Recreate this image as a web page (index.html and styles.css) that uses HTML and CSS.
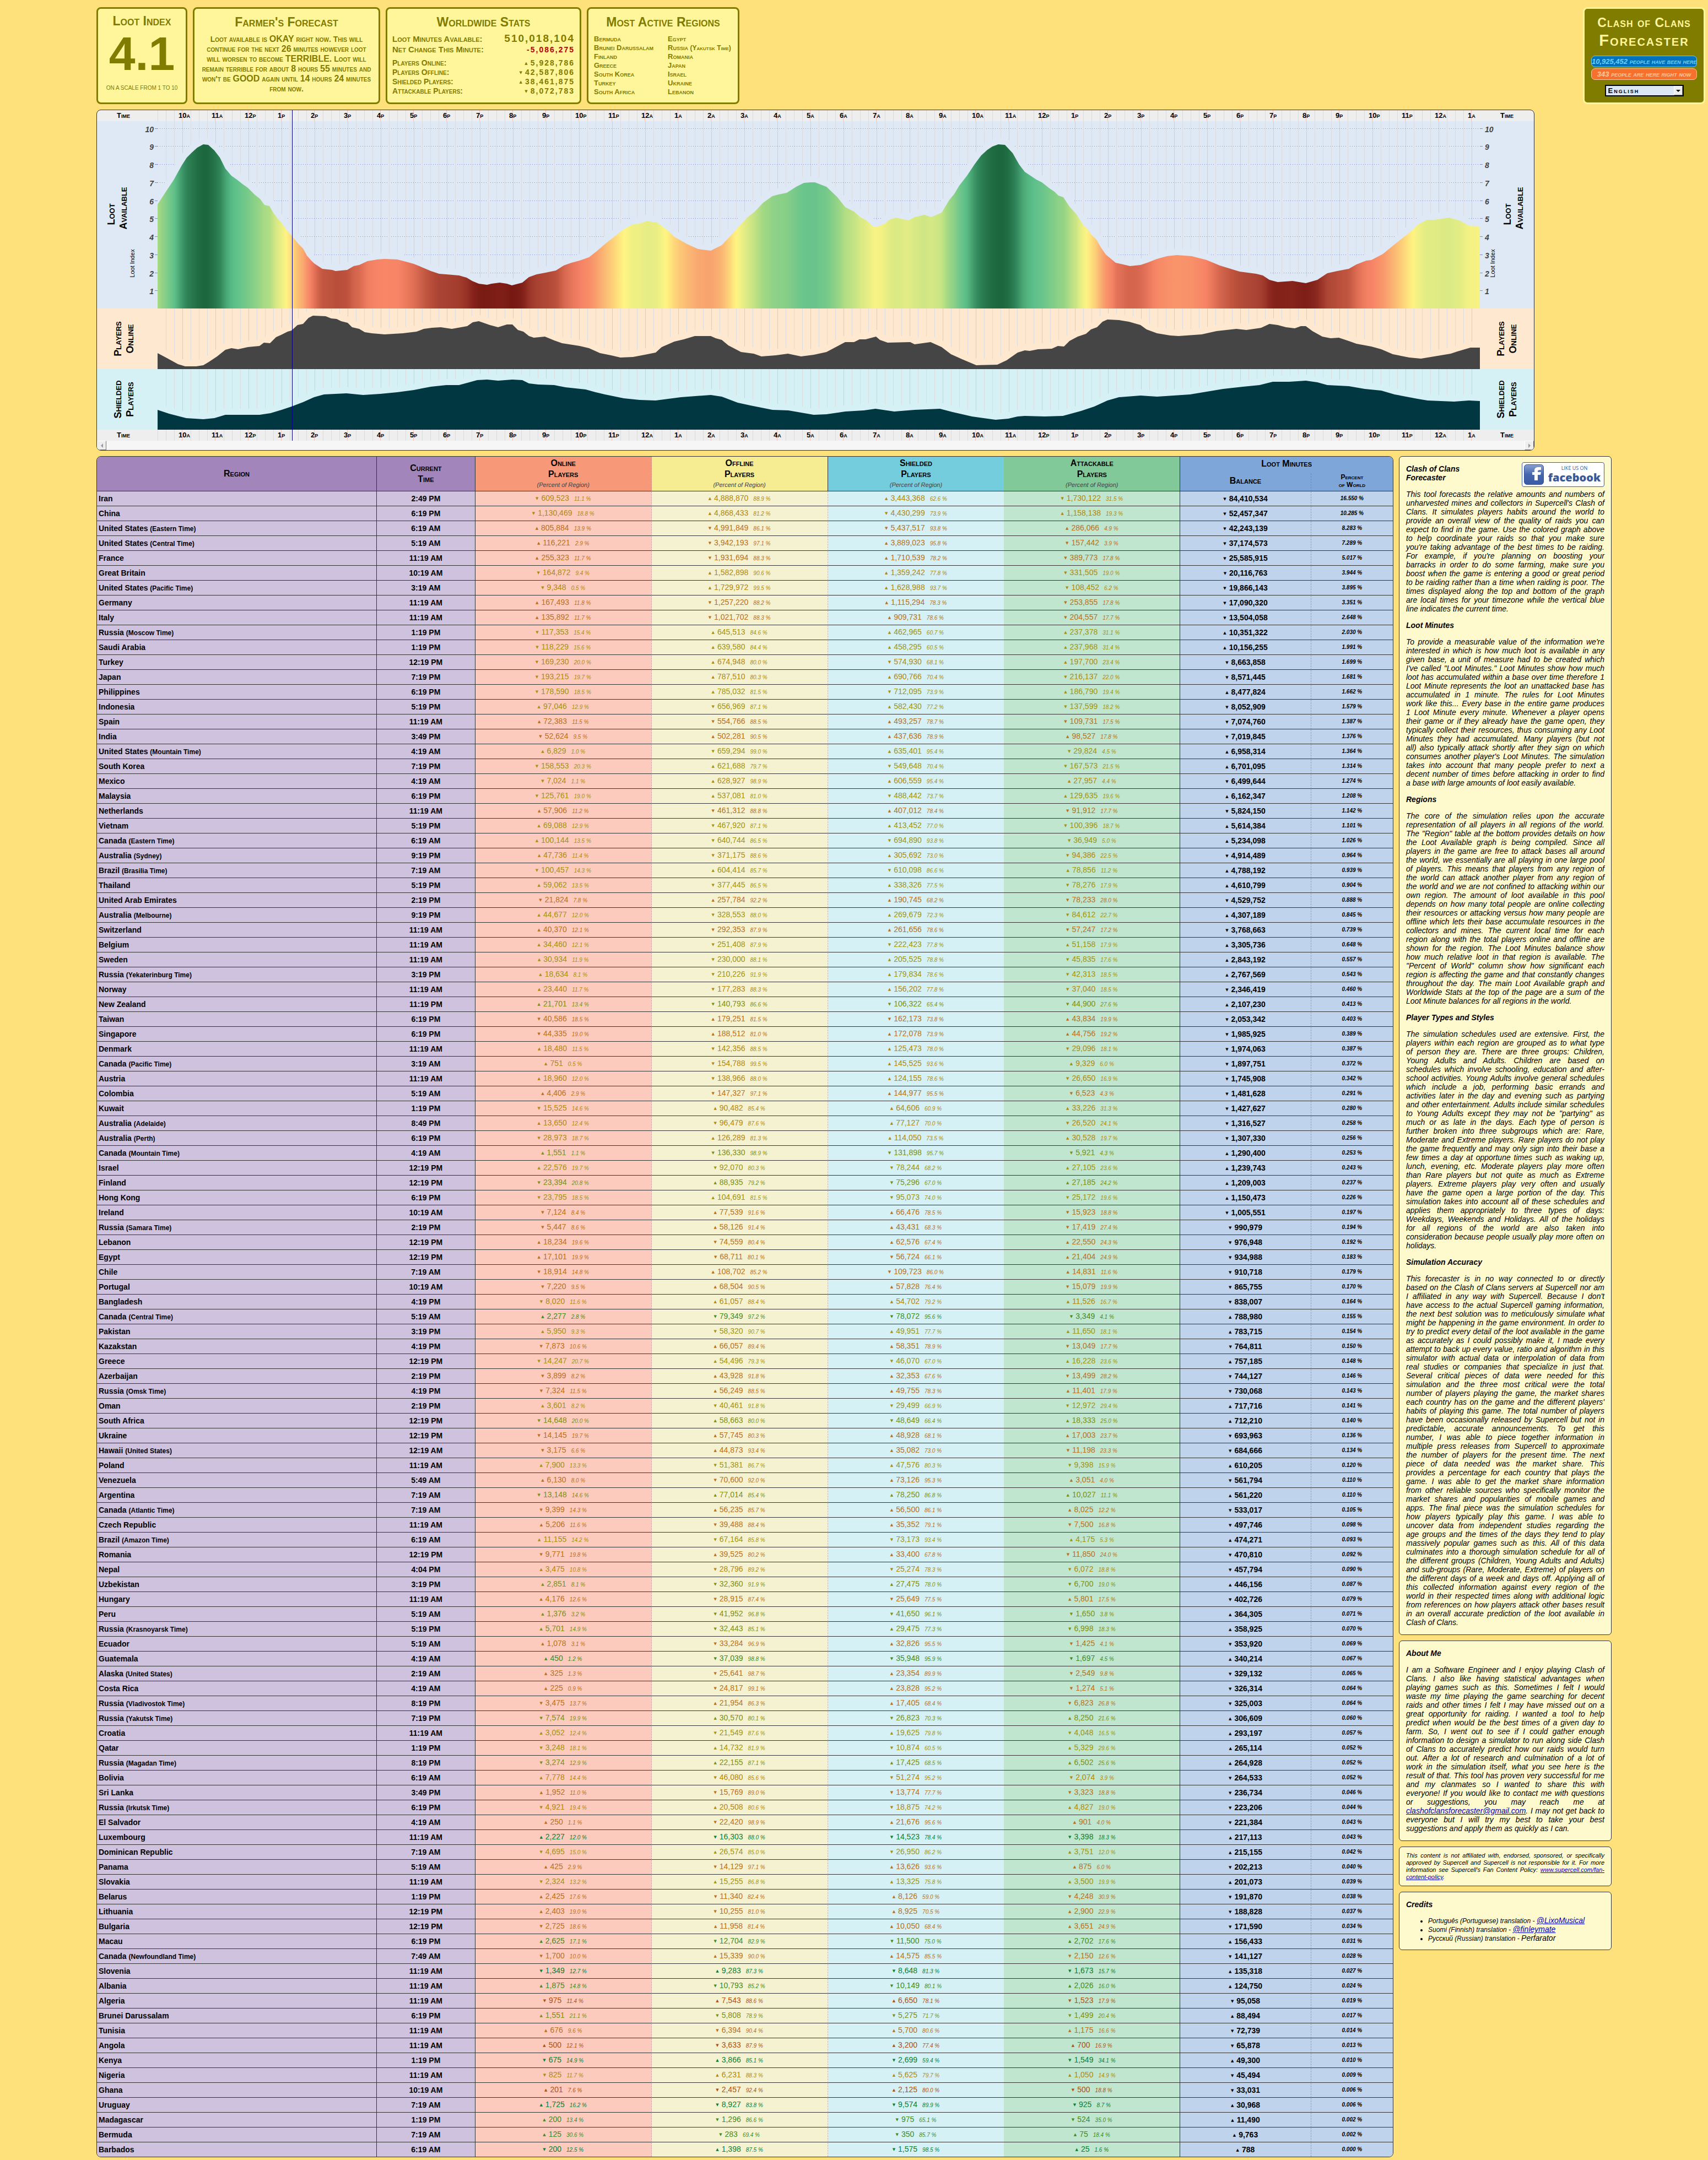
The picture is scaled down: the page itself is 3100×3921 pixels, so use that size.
FILE: index.html
```html
<!DOCTYPE html>
<html lang="en">
<head>
<meta charset="utf-8">
<title>Clash of Clans Forecaster</title>
<link rel="stylesheet" href="styles.css">
</head>
<body>
<header class="top">
  <div class="cards">
    <section class="card card-index">
      <h2>Loot Index</h2>
      <p class="index-value">4.1</p>
      <p class="index-note">on a scale from 1 to 10</p>
    </section>
    <section class="card card-forecast">
      <h2>Farmer's Forecast</h2>
      <p>Loot available is <b>OKAY</b> right now. This will<br>
        continue for the next <b>26</b> minutes however loot<br>
        will worsen to become <b>TERRIBLE.</b> Loot will<br>
        remain terrible for about <b>8</b> hours <b>55</b> minutes and<br>
        won't be <b>GOOD</b> again until <b>14</b> hours <b>24</b> minutes<br>
        from now.</p>
    </section>
    <section class="card card-stats">
      <h2>Worldwide Stats</h2>
      <dl class="stats-main">
        <div><dt>Loot Minutes Available:</dt><dd class="big">510,018,104</dd></div>
        <div><dt>Net Change This Minute:</dt><dd class="loss">-5,086,275</dd></div>
      </dl>
      <dl class="stats-players">
        <div><dt>Players Online:</dt><dd><i class="arrow">▲</i>5,928,786</dd></div>
        <div><dt>Players Offline:</dt><dd><i class="arrow">▼</i>42,587,806</dd></div>
        <div><dt>Shielded Players:</dt><dd><i class="arrow">▲</i>38,461,875</dd></div>
        <div><dt>Attackable Players:</dt><dd><i class="arrow">▼</i>8,072,783</dd></div>
      </dl>
    </section>
    <section class="card card-regions">
      <h2>Most Active Regions</h2>
      <ul>
        <li>Bermuda</li><li>Brunei Darussalam</li><li>Finland</li><li>Greece</li><li>South Korea</li><li>Turkey</li><li>South Africa</li>
        <li>Egypt</li><li>Russia <small>(Yakutsk Time)</small></li><li>Romania</li><li>Japan</li><li>Israel</li><li>Ukraine</li><li>Lebanon</li>
      </ul>
    </section>
  </div>
  <div class="brand">
    <h1><span>Clash of Clans</span> <strong>Forecaster</strong></h1>
    <p class="pill pill-blue"><b>10,925,452</b> people have been here</p>
    <p class="pill pill-orange"><b>343</b> people are here right now</p>
    <label class="lang">
      <select aria-label="Language"><option>English</option><option>Português</option><option>Suomi</option><option>Русский</option></select>
      <span class="lang-arrow"></span>
    </label>
  </div>
</header>

<section class="chart" aria-label="Forecast chart">
  <div class="corner">Time</div><div class="hours" data-hours></div><div class="corner">Time</div>
  <svg class="side loot" data-side="left" viewBox="0 0 110 340">
    <text class="side-title" transform="translate(32 169) rotate(-90)">Loot</text>
    <text class="side-title" transform="translate(54 158) rotate(-90)">Available</text>
    <text class="side-note" transform="translate(68 258) rotate(-90)">Loot Index</text>
  </svg>
  <svg class="plot loot" id="plot-loot" viewBox="0 0 2400 340" preserveAspectRatio="none"></svg>
  <svg class="side loot" data-side="right" viewBox="0 0 98 340">
    <text class="side-title" transform="translate(56 169) rotate(-90)">Loot</text>
    <text class="side-title" transform="translate(78 158) rotate(-90)">Available</text>
    <text class="side-note" transform="translate(27 258) rotate(-90)">Loot Index</text>
  </svg>
  <svg class="side online" viewBox="0 0 110 110">
    <text class="side-title" transform="translate(44 55) rotate(-90)">Players</text>
    <text class="side-title" transform="translate(66 55) rotate(-90)">Online</text>
  </svg>
  <svg class="plot online" id="plot-online" viewBox="0 0 2400 110" preserveAspectRatio="none"></svg>
  <svg class="side online" viewBox="0 0 98 110">
    <text class="side-title" transform="translate(44 55) rotate(-90)">Players</text>
    <text class="side-title" transform="translate(66 55) rotate(-90)">Online</text>
  </svg>
  <svg class="side shielded" viewBox="0 0 110 110">
    <text class="side-title" transform="translate(44 55) rotate(-90)">Shielded</text>
    <text class="side-title" transform="translate(66 55) rotate(-90)">Players</text>
  </svg>
  <svg class="plot shielded" id="plot-shielded" viewBox="0 0 2400 110" preserveAspectRatio="none"></svg>
  <svg class="side shielded" viewBox="0 0 98 110">
    <text class="side-title" transform="translate(44 55) rotate(-90)">Shielded</text>
    <text class="side-title" transform="translate(66 55) rotate(-90)">Players</text>
  </svg>
  <div class="corner">Time</div><div class="hours" data-hours></div><div class="corner">Time</div>
  <div class="scroller">
    <button type="button" aria-label="Scroll left"><svg viewBox="0 0 8 8"><path d="M6 0v8L2 4z"/></svg></button>
    <button type="button" aria-label="Scroll right"><svg viewBox="0 0 8 8"><path d="M2 0v8l4-4z"/></svg></button>
  </div>
  <div class="now"></div>
</section>

<main class="content">
  <table class="regions">
    <colgroup><col class="c-region"><col class="c-time"><col class="c-num"><col class="c-num"><col class="c-num"><col class="c-num"><col class="c-balance"><col class="c-share"></colgroup>
    <thead>
      <tr class="head-a">
        <th rowspan="2" class="k-region">Region</th>
        <th rowspan="2" class="k-time">Current<br>Time</th>
        <th rowspan="2" class="k-online">Online<br>Players<small>(Percent of Region)</small></th>
        <th rowspan="2" class="k-offline">Offline<br>Players<small>(Percent of Region)</small></th>
        <th rowspan="2" class="k-shielded">Shielded<br>Players<small>(Percent of Region)</small></th>
        <th rowspan="2" class="k-attack">Attackable<br>Players<small>(Percent of Region)</small></th>
        <th colspan="2" class="k-loot">Loot Minutes</th>
      </tr>
      <tr class="head-b">
        <th class="k-balance">Balance</th>
        <th class="k-share">Percent<br>of World</th>
      </tr>
    </thead>
    <tbody id="rows"></tbody>
  </table>

  <aside class="side-column">
    <article class="panel">
      <a class="fb" href="#facebook">
        <svg class="fb-icon" viewBox="0 0 36 37"><defs><linearGradient id="fbg" x1="0" y1="0" x2="0" y2="1"><stop offset="0" stop-color="#8aa0d2"/><stop offset=".5" stop-color="#4565ad"/><stop offset="1" stop-color="#3c5ba6"/></linearGradient></defs><rect x=".5" y=".5" width="35" height="36" rx="5" fill="url(#fbg)" stroke="#2f4f9a"/><path d="M19 29V19h-4v-5h4v-3c0-4 3-6 7-6h5v5h-3c-2 0-3 1-3 2v2h6l-1 5h-5v10z" fill="#fff"/></svg>
        <span class="fb-text"><small>LIKE US ON</small><b>facebook</b></span>
      </a>
      <h3>Clash of Clans Forecaster</h3>
      <p>This tool forecasts the relative amounts and numbers of
unharvested mines and collectors in Supercell's Clash of
Clans. It simulates players habits around the world to
provide an overall view of the quality of raids you can
expect to find in the game. Use the colored graph above
to help coordinate your raids so that you make sure
you're taking advantage of the best times to be raiding.
For example, if you're planning on boosting your
barracks in order to do some farming, make sure you
boost when the game is entering a good or great period
to be raiding rather than a time when raiding is poor. The
times displayed along the top and bottom of the graph
are local times for your timezone while the vertical blue
<span>line indicates the current time.</span></p>
      <h3>Loot Minutes</h3>
      <p>To provide a measurable value of the information we're
interested in which is how much loot is available in any
given base, a unit of measure had to be created which
I've called "Loot Minutes." Loot Minutes show how much
loot has accumulated within a base over time therefore 1
Loot Minute represents the loot an unattacked base has
accumulated in 1 minute. The rules for Loot Minutes
work like this... Every base in the entire game produces
1 Loot Minute every minute. Whenever a player opens
their game or if they already have the game open, they
typically collect their resources, thus consuming any Loot
Minutes they had accumulated. Many players (but not
all) also typically attack shortly after they sign on which
consumes another player's Loot Minutes. The simulation
takes into account that many people prefer to next a
decent number of times before attacking in order to find
<span>a base with large amounts of loot easily available.</span></p>
      <h3>Regions</h3>
      <p>The core of the simulation relies upon the accurate
representation of all players in all regions of the world.
The "Region" table at the bottom provides details on how
the Loot Available graph is being compiled. Since all
players in the game are free to attack bases all around
the world, we essentially are all playing in one large pool
of players. This means that players from any region of
the world can attack another player from any region of
the world and we are not confined to attacking within our
own region. The amount of loot available in this pool
depends on how many total people are online collecting
their resources or attacking versus how many people are
offline which lets their base accumulate resources in the
collectors and mines. The current local time for each
region along with the total players online and offline are
shown for the region. The Loot Minutes balance show
how much relative loot in that region is available. The
"Percent of World" column show how significant each
region is affecting the game and that constantly changes
throughout the day. The main Loot Available graph and
Worldwide Stats at the top of the page are a sum of the
<span>Loot Minute balances for all regions in the world.</span></p>
      <h3>Player Types and Styles</h3>
      <p>The simulation schedules used are extensive. First, the
players within each region are grouped as to what type
of person they are. There are three groups: Children,
Young Adults and Adults. Children are based on
schedules which involve schooling, education and after-
school activities. Young Adults involve general schedules
which include a job, performing basic errands and
activities later in the day and evening such as partying
and other entertainment. Adults include similar schedules
to Young Adults except they may not be "partying" as
much or as late in the days. Each type of person is
further broken into three subgroups which are: Rare,
Moderate and Extreme players. Rare players do not play
the game frequently and may only sign into their base a
few times a day at opportune times such as waking up,
lunch, evening, etc. Moderate players play more often
than Rare players but not quite as much as Extreme
players. Extreme players play very often and usually
have the game open a large portion of the day. This
simulation takes into account all of these schedules and
applies them appropriately to three types of days:
Weekdays, Weekends and Holidays. All of the holidays
for all regions of the world are also taken into
consideration because people usually play more often on
<span>holidays.</span></p>
      <h3>Simulation Accuracy</h3>
      <p>This forecaster is in no way connected to or directly
based on the Clash of Clans servers at Supercell nor am
I affiliated in any way with Supercell. Because I don't
have access to the actual Supercell gaming information,
the next best solution was to meticulously simulate what
might be happening in the game environment. In order to
try to predict every detail of the loot available in the game
as accurately as I could possibly make it, I made every
attempt to back up every value, ratio and algorithm in this
simulator with actual data or interpolation of data from
real studies or companies that specialize in just that.
Several critical pieces of data were needed for this
simulation and the three most critical were the total
number of players playing the game, the market shares
each country has on the game and the different players'
habits of playing this game. The total number of players
have been occasionally released by Supercell but not in
predictable, accurate announcements. To get this
number, I was able to piece together information in
multiple press releases from Supercell to approximate
the number of players for the present time. The next
piece of data needed was the market share. This
provides a percentage for each country that plays the
game. I was able to get the market share information
from other reliable sources who specifically monitor the
market shares and popularities of mobile games and
apps. The final piece was the simulation schedules for
how players typically play this game. I was able to
uncover data from independent studies regarding the
age groups and the times of the days they tend to play
massively popular games such as this. All of this data
culminates into a thorough simulation schedule for all of
the different groups (Children, Young Adults and Adults)
and sub-groups (Rare, Moderate, Extreme) of players on
the different days of a week and days off. Applying all of
this collected information against every region of the
world in their respected times along with additional logic
from references on how players attack other bases result
in an overall accurate prediction of the loot available in
<span>Clash of Clans.</span></p>
    </article>
    <article class="panel">
      <h3>About Me</h3>
      <p>I am a Software Engineer and I enjoy playing Clash of
Clans. I also like having statistical advantages when
playing games such as this. Sometimes I felt I would
waste my time playing the game searching for decent
raids and other times I felt I may have missed out on a
great opportunity for raiding. I wanted a tool to help
predict when would be the best times of a given day to
farm. So, I went out to see if I could gather enough
information to design a simulator to run along side Clash
of Clans to accurately predict how our raids would turn
out. After a lot of research and culmination of a lot of
work in the simulation itself, what you see here is the
result of that. This tool has proven very successful for me
and my clanmates so I wanted to share this with
everyone! If you would like to contact me with questions
or suggestions, you may reach me at
<a href="mailto:clashofclansforecaster@gmail.com">clashofclansforecaster@gmail.com</a>. I may not get back to
everyone but I will try my best to take your best
<span>suggestions and apply them as quickly as I can.</span></p>
    </article>
    <article class="panel panel-legal">
      <p>This content is not affiliated with, endorsed, sponsored, or specifically
approved by Supercell and Supercell is not responsible for it. For more
information see Supercell's Fan Content Policy: <a href="#policy">www.supercell.com/fan-</a>
<span><a href="#policy">content-policy</a>.</span></p>
    </article>
    <article class="panel">
      <h3>Credits</h3>
      <ul class="credits">
        <li>Português (Portuguese) translation - <a href="#lixo">@LixoMusical</a></li>
        <li>Suomi (Finnish) translation - <a href="#finley">@finleymate</a></li>
        <li>Русский (Russian) translation - <span>Perfarator</span></li>
      </ul>
    </article>
  </aside>
</main>
<script src="app.js"></script>
</body>
</html>
```
FILE: styles.css
```css
* { box-sizing: border-box; }
body {
  margin: 0;
  padding: 13px 0 5px;
  background: #ffe17b;
  color: #000;
  font-family: "Liberation Sans", Arial, sans-serif;
  font-size: 14px;
}
h1, h2, h3, p, dl, dd, ul { margin: 0; padding: 0; }

/* header cards */
.top { display: flex; justify-content: space-between; align-items: stretch; padding: 0 5px 0 175px; }
.cards { display: flex; gap: 10px; }
.card {
  height: 176px;
  border: 3px solid #807c00;
  border-radius: 8px;
  background: #fff69b;
  color: #807c00;
  font-variant: small-caps;
}
.card h2 { font-size: 23px; line-height: 28px; font-weight: 700; text-align: center; white-space: nowrap; }
.card-index { width: 165px; text-align: center; padding-top: 8px; }
.index-value { font-size: 86px; line-height: 90px; font-weight: 700; }
.index-note { font-size: 10px; line-height: 12px; text-transform: uppercase; font-variant: normal; padding-top: 12px; }
.card-forecast { width: 340px; padding: 10px 4px 0; }
.card-forecast p { margin-top: 8px; font-size: 14px; line-height: 18px; text-align: center; font-weight: 700; }
.card-forecast b { font-size: 16px; line-height: 16px; }
.card-stats { width: 355px; padding: 10px 9px 0; }
.stats-main div, .stats-players div { display: flex; justify-content: space-between; align-items: baseline; }
.card dt, .card-regions li { font-size: 15px; font-weight: 700; }
.stats-main { padding-top: 6px; }
.stats-main div { line-height: 20px; height: 20px; }
.stats-main dd, .stats-players dd { letter-spacing: 2px; font-weight: 700; font-size: 14px; }
.stats-main .big { font-size: 19px; }
.stats-main .loss { color: #b80000; }
.stats-players { padding-top: 6px; }
.stats-players div { line-height: 17px; height: 17px; }
.stats-players dt { font-size: 14px; }
.arrow { font: normal 7px "DejaVu Sans", sans-serif; vertical-align: 2px; margin-right: 5px; letter-spacing: 0; }
.card-regions { width: 277px; padding: 10px 10px 0; }
.card-regions ul { list-style: none; margin-top: 9px; display: grid; grid-template-rows: repeat(7, 16px); grid-auto-flow: column; grid-template-columns: 134px 1fr; }
.card-regions li { font-size: 13px; line-height: 16px; white-space: nowrap; }
.card-regions small { font-size: 12px; }

.brand {
  width: 222px;
  border: 3px solid #fff69b;
  border-radius: 8px;
  background: #807c00;
  color: #fff69b;
  font-variant: small-caps;
  text-align: center;
  padding: 11px 12px 0;
}
.brand h1 { font-weight: 700; }
.brand h1 span, .brand h1 strong { display: block; white-space: nowrap; }
.brand h1 span { font-size: 23px; line-height: 28px; letter-spacing: 1px; }
.brand h1 strong { font-size: 29px; line-height: 36px; letter-spacing: 2px; }
.pill { height: 21px; margin-bottom: 2px; border: 1px solid; border-radius: 7px; font-size: 13px; line-height: 19px; font-style: italic; font-weight: 700; white-space: nowrap; }
.pill-blue { margin-top: 10px; background: #0072bc; color: #6dcff6; }
.pill-orange { background: #f7712c; color: #fdc7a0; }
.lang { display: inline-grid; margin-top: 7px; width: 143px; height: 21px; }
.lang select {
  grid-area: 1 / 1;
  appearance: none;
  border: 2px solid #000;
  border-radius: 0;
  background: #dce6f4;
  padding: 0 4px;
  font: small-caps 700 13px "Liberation Sans", Arial, sans-serif;
  letter-spacing: 2px;
}
.lang-arrow {
  grid-area: 1 / 1;
  justify-self: end;
  width: 16px;
  margin: 2px 2px;
  background: #eee;
  border: 1px solid #fff;
  border-right-color: #777;
  border-bottom-color: #777;
  display: grid;
  place-items: center;
  pointer-events: none;
}
.lang-arrow::after { content: ""; border: 4px solid transparent; border-top-color: #000; border-bottom: 0; }

/* chart */
.chart {
  position: relative;
  display: grid;
  grid-template-columns: 110px minmax(0, 1fr) 98px;
  grid-template-rows: 20px 340px 110px 110px 20px 17px;
  margin: 10px 315px 0 175px;
  border: 1px solid #333;
  border-radius: 8px;
  overflow: hidden;
  background: #eee;
}
.corner { text-align: center; font: small-caps 700 13px/20px "Liberation Sans", Arial, sans-serif; padding-right: 14px; }
.corner + .hours + .corner { padding-right: 0; }
.hours { display: grid; grid-template-columns: repeat(40, minmax(0, 1fr)); }
.hours span {
  padding-left: 38px;
  font: small-caps 700 13px/20px "Liberation Sans", Arial, sans-serif;
  white-space: nowrap;
  background:
    linear-gradient(#dcdcdc, #dcdcdc) 0 0 / 1px 100% no-repeat,
    linear-gradient(#dcdcdc, #dcdcdc) 25% 0 / 1px 100% no-repeat,
    linear-gradient(#dcdcdc, #dcdcdc) 50% 0 / 1px 100% no-repeat,
    linear-gradient(#f3c3b8, #f3c3b8) 75% 0 / 1px 100% no-repeat;
}
.chart > svg { display: block; width: 100%; height: 100%; }
.loot { background: #dfe9f5; --bg: #dfe9f5; }
.online { background: #fee9d0; --bg: #fee9d0; }
.shielded { background: #d5f1f5; --bg: #d5f1f5; }
.side-title { font-size: 18px; font-weight: 700; font-variant: small-caps; text-anchor: middle; }
.side-note { font-size: 11px; text-anchor: middle; }
.tick-label { font-size: 14px; font-weight: 700; font-style: italic; fill: #444; }
.tick { stroke: #7d8fc4; }
.grid-h { stroke: #8090c4; stroke-dasharray: 1 3; }
.grid-v { stroke: #dadce0; }
.grid-hour { stroke: #f3c3b8; }
.halo { fill: none; stroke: var(--bg); stroke-width: 22; }
.area-online { fill: #454545; }
.area-shielded { fill: #003740; }
.now { position: absolute; top: 0; bottom: 17px; left: calc(110px + (100% - 208px) * .1015); width: 1px; background: #000080; }
.scroller { grid-column: 1 / -1; display: flex; justify-content: space-between; background: #f6f6f6; }
.scroller button { width: 17px; height: 17px; padding: 0; border: 1px solid; border-color: #fff #777 #777 #fff; background: #eee; display: grid; place-items: center; }
.scroller svg { width: 8px; height: 8px; fill: #999; }

/* content */
.content { display: flex; gap: 10px; align-items: flex-start; margin: 10px 175px 0; }
.regions {
  flex: 1;
  min-width: 0;
  table-layout: fixed;
  border-collapse: separate;
  border-spacing: 0;
  border: 1px solid #333;
  border-radius: 8px;
  overflow: hidden;
}
.c-region { width: 21.6%; }
.c-time { width: 7.6%; }
.c-num { width: 13.6%; }
.c-balance { width: 10.1%; }
.c-share { width: 6.3%; }
.regions th { padding: 0; font: small-caps 700 16px/20px "Liberation Sans", Arial, sans-serif; border-bottom: 1px solid #333; border-right: 1px solid #333; }
.regions th small { display: block; font: italic 400 11px/18px "Liberation Sans", Arial, sans-serif; color: #444; }
.head-a { height: 30px; }
.head-b { height: 33px; }
.regions .k-region, .regions .k-time { background: #a286bb; }
.regions .k-online { background: #f79878; border-right-style: dashed; border-right-color: #c98; }
.regions .k-offline { background: #f6ec92; }
.regions .k-shielded { background: #74cddd; border-right: 0; }
.regions .k-attack { background: #82c99a; }
.regions .k-loot { background: #7ea6d8; border: 0; vertical-align: top; padding-top: 3px; }
.regions .k-balance { background: #7ea6d8; border-right: 1px dashed #6a8ab8; vertical-align: bottom; padding-bottom: 8px; }
.regions .k-share { background: #7ea6d8; border-right: 0; font-size: 12px; line-height: 14px; vertical-align: top; }
.regions td { height: 27px; padding: 0; border-bottom: 1px solid #333; text-align: center; white-space: nowrap; line-height: 20px; }
.regions tbody tr:last-child td { border-bottom: 0; height: 26px; }
.regions td:nth-child(1) { background: #cfc2df; text-align: left; padding-left: 3px; font-weight: 700; border-right: 1px solid #333; }
.regions td:nth-child(1) small { font-size: 12px; }
.regions td:nth-child(2) { background: #cfc2df; font-weight: 700; border-right: 1px solid #333; }
.regions td:nth-child(3) { background: #fccbbd; border-right: 1px dashed #caa; }
.regions td:nth-child(4) { background: #f5f2d2; border-right: 1px dashed #bbb; }
.regions td:nth-child(5) { background: #d5f1f5; }
.regions td:nth-child(6) { background: #c1e6cf; border-right: 1px solid #333; }
.regions td:nth-child(7) { background: #bfd3ec; font-weight: 700; color: #000; border-right: 1px dashed #8aa0c0; }
.regions td:nth-child(8) { background: #bfd3ec; color: #000; font-size: 10px; font-weight: 700; font-style: italic; }
.regions em { font-size: 10px; margin-left: 9px; }
.tone-r { color: #b05010; }
.tone-o { color: #b8701c; }
.tone-g { color: #b08810; }
.tone-y { color: #a09410; }
.tone-l { color: #7a9014; }
.tone-m { color: #3f8c1e; }
.tone-d { color: #087f32; }
.regions td:nth-child(-n+2) { color: #000; }

/* side column */
.side-column { flex: 0 0 386px; display: grid; gap: 10px; }
.panel { border: 1px solid #333; border-radius: 6px; background: #fffacd; padding: 0 12px; font-style: italic; line-height: 16px; }
.panel h3, .panel p { font-size: 14px; margin: 14px 0; }
.panel p { text-align: justify; text-align-last: justify; white-space: pre-line; }
.panel p span { display: inline-block; width: 100%; vertical-align: top; text-align-last: left; }
.panel a { color: #0000c0; }
.panel-legal p { font-size: 11px; line-height: 13px; margin: 9px 0; }
.credits { margin: 12px 0; padding-left: 40px; font-size: 12px; }
.credits a, .credits span { font-size: 14px; line-height: 14px; }
.panel .fb { float: right; display: flex; gap: 5px; width: 150px; height: 45px; margin: 10px 0 0 70px; border: 1px solid #3b5ba6; border-radius: 4px; background: #fff; padding: 3px; color: #3b5998; text-decoration: none; font-style: normal; }
.fb-icon { width: 36px; height: 37px; flex: none; }
.fb-text { flex: 1; display: flex; flex-direction: column; align-items: center; }
.fb-text small { font: 9px/14px "Open Sans", sans-serif; }
.fb-text b { font: 800 20px/20px "Open Sans", sans-serif; }
```
FILE: app.js
```js
const NS = 'http://www.w3.org/2000/svg';
const make = (tag, attrs, parent, text) => {
  const el = document.createElementNS(NS, tag);
  for (const k in attrs) el.setAttribute(k, attrs[k]);
  if (text !== undefined) el.textContent = text;
  parent.appendChild(el);
  return el;
};

/* hour labels, 10 AM through 1 AM the following day */
document.querySelectorAll('[data-hours]').forEach(strip => {
  for (let i = 0; i < 40; i++) {
    const h = (10 + i) % 24;
    const s = document.createElement('span');
    s.textContent = (h % 12 || 12) + (h < 12 ? 'a' : 'p');
    strip.appendChild(s);
  }
});

const UNIT = 32.75;
const levelY = v => Math.round(340 - UNIT * v) + 0.5;
document.querySelectorAll('[data-side]').forEach(svg => {
  const left = svg.dataset.side === 'left';
  for (let v = 1; v <= 10; v++) {
    const y = levelY(v);
    make('line', { class: 'tick', x1: left ? 105 : 0, x2: left ? 110 : 5, y1: y, y2: y }, svg);
    make('text', { class: 'tick-label', x: left ? 103 : 9, y: y + 6, 'text-anchor': left ? 'end' : 'start' }, svg, v);
  }
});

const loot = '0,151 17,125 29,107 44,80 53,66 62,57 72,48 83,42 92,43 103,53 113,66 123,86 134,99 144,106 154,114 164,121 177,134 186,141 194,152 203,154 210,166 218,177 224,183 236,200 243,207 255,222 264,231 271,244 278,252 284,258 299,268 317,270 323,272 344,270 356,263 366,261 381,254 399,251 412,250 435,251 447,254 465,259 475,263 496,272 511,277 524,278 547,280 561,284 571,290 583,295 598,297 606,295 621,293 634,295 643,298 662,293 674,283 688,278 704,275 723,271 737,262 751,257 766,253 783,247 797,236 812,223 826,212 846,196 863,187 875,186 888,181 898,183 905,183 927,199 938,210 961,223 981,232 1004,235 1024,225 1041,207 1056,190 1070,175 1084,164 1099,148 1116,136 1127,133 1142,130 1159,119 1173,112 1185,111 1193,111 1214,119 1234,138 1248,156 1264,164 1275,174 1285,179 1300,192 1305,192 1320,186 1328,179 1340,175 1363,180 1374,174 1392,170 1404,174 1423,166 1437,143 1446,132 1455,117 1469,99 1483,78 1495,62 1506,52 1515,46 1526,42 1538,43 1552,58 1564,79 1574,92 1595,106 1605,111 1619,122 1628,128 1635,135 1644,138 1655,155 1667,168 1679,187 1688,196 1694,205 1704,215 1712,229 1721,242 1739,257 1765,263 1784,261 1796,257 1814,250 1832,245 1850,243 1877,245 1904,252 1928,262 1964,273 1994,277 2006,280 2018,288 2033,292 2060,290 2084,294 2105,288 2123,276 2141,272 2162,268 2176,260 2194,253 2203,252 2224,241 2236,231 2251,219 2266,207 2278,197 2287,188 2304,179 2317,179 2344,175 2365,181 2380,190 2400,191';
const online = '0,81 17,90 37,101 50,105 70,105 83,103 93,97 108,87 123,75 134,72 146,74 164,70 185,68 193,62 204,63 215,52 224,48 236,42 243,40 254,30 264,28 274,17 282,13 305,14 315,18 325,19 333,23 345,26 353,34 366,37 376,43 389,45 412,47 445,45 470,42 483,37 498,35 514,34 534,37 562,32 572,25 583,23 603,30 618,34 634,29 644,29 654,39 664,42 674,50 683,53 703,51 720,58 734,63 766,68 783,72 803,81 823,85 840,89 863,88 884,84 904,80 915,70 938,60 955,56 975,50 1004,50 1013,54 1024,57 1036,67 1059,79 1082,82 1096,87 1122,85 1144,82 1168,87 1191,84 1214,79 1231,70 1248,61 1264,61 1274,56 1285,56 1304,51 1311,57 1325,62 1366,61 1374,65 1403,61 1423,70 1440,83 1460,92 1486,103 1524,102 1541,94 1561,80 1574,76 1583,77 1598,74 1623,73 1634,68 1645,69 1655,59 1670,51 1685,46 1694,38 1705,34 1715,24 1724,20 1745,21 1763,24 1784,30 1795,38 1814,45 1838,49 1853,50 1895,47 1922,41 1958,37 1976,39 2003,35 2018,28 2033,30 2048,34 2064,36 2075,32 2084,32 2096,41 2114,51 2129,54 2144,53 2162,59 2176,64 2203,69 2221,74 2242,83 2272,89 2293,91 2311,88 2347,82 2359,78 2383,71 2400,71';
const shielded = '0,74 21,81 52,89 83,91 103,89 123,83 185,83 205,80 225,74 243,68 264,60 284,51 302,46 343,44 373,47 404,45 435,42 465,38 496,32 524,29 547,29 562,25 580,20 598,19 618,21 644,19 662,20 674,26 691,28 720,29 740,33 777,37 795,42 812,46 846,53 875,56 904,57 927,54 950,51 1004,47 1024,50 1053,61 1076,66 1116,74 1145,75 1168,79 1191,83 1214,82 1248,77 1282,75 1303,72 1337,77 1374,74 1420,72 1443,78 1478,86 1521,92 1544,90 1561,86 1574,85 1610,86 1643,85 1676,76 1700,68 1724,57 1745,51 1784,48 1814,50 1844,48 1874,46 1904,41 1934,36 1970,32 2000,29 2024,23 2054,23 2084,21 2105,24 2123,29 2162,31 2191,36 2221,39 2245,46 2287,54 2305,57 2353,59 2380,57 2400,58';

/* colour scale of the loot index */
const scale = [[1.2, 112, 20, 14], [1.5, 132, 34, 26], [1.9, 168, 66, 50], [2.2, 194, 86, 64], [2.7, 247, 132, 102], [3.3, 249, 168, 112], [3.9, 253, 208, 120], [4.4, 255, 245, 131], [5, 220, 234, 132], [5.8, 166, 218, 132], [7, 104, 196, 139], [7.3, 90, 190, 136], [8.2, 52, 138, 94], [9.1, 28, 103, 62]];
const colorAt = v => {
  let i = 1;
  while (i < scale.length - 1 && v > scale[i][0]) i++;
  const a = scale[i - 1], b = scale[i];
  const t = Math.max(0, Math.min(1, (v - a[0]) / (b[0] - a[0])));
  return 'rgb(' + [1, 2, 3].map(k => Math.round(a[k] + (b[k] - a[k]) * t)).join(',') + ')';
};

function plot(id, points, height, levels) {
  const svg = document.getElementById(id);
  for (let v = 1; levels && v <= 10; v++) make('line', { class: 'grid-h', x1: 0, x2: 2400, y1: levelY(v), y2: levelY(v) }, svg);
  for (let x = 15; x < 2400; x += 15) make('line', { class: x % 60 === 45 ? 'grid-hour' : 'grid-v', x1: x + 0.5, x2: x + 0.5, y1: 0, y2: height }, svg);
  make('polyline', { class: 'halo', points }, svg);
  const area = make('polygon', { class: 'area-' + id.slice(5), points: '0,' + height + ' ' + points + ' 2400,' + height }, svg);
  if (levels) {
    const defs = make('defs', {}, svg);
    const g = make('linearGradient', { id: 'heat', gradientUnits: 'userSpaceOnUse', x1: 0, x2: 2400, y1: 0, y2: 0 }, defs);
    const p = points.split(' ').map(s => s.split(',').map(Number));
    for (let x = 0, i = 0; x <= 2400; x += 6) {
      while (p[i + 1][0] < x) i++;
      const y = p[i][1] + (p[i + 1][1] - p[i][1]) * (x - p[i][0]) / (p[i + 1][0] - p[i][0]);
      make('stop', { offset: x / 2400, 'stop-color': colorAt((height - y) / UNIT) }, g);
    }
    area.setAttribute('fill', 'url(#heat)');
  }
}
plot('plot-loot', loot, 340, true);
plot('plot-online', online, 110, false);
plot('plot-shielded', shielded, 110, false);

/* name | time | tone | trend of each figure | online | offline | shielded | attackable | balance | share */
const data = `Iran|2:49 PM|g|duudd|609,523 11.1|4,888,870 88.9|3,443,368 62.6|1,730,122 31.5|84,410,534|16.550
China|6:19 PM|g|dudud|1,130,469 18.8|4,868,433 81.2|4,430,299 73.9|1,158,138 19.3|52,457,347|10.285
United States (Eastern Time)|6:19 AM|o|uddud|805,884 13.9|4,991,849 86.1|5,437,517 93.8|286,066 4.9|42,243,139|8.283
United States (Central Time)|5:19 AM|o|ududd|116,221 2.9|3,942,193 97.1|3,889,023 95.8|157,442 3.9|37,174,573|7.289
France|11:19 AM|o|ududd|255,323 11.7|1,931,694 88.3|1,710,539 78.2|389,773 17.8|25,585,915|5.017
Great Britain|10:19 AM|g|duudd|164,872 9.4|1,582,898 90.6|1,359,242 77.8|331,505 19.0|20,116,763|3.944
United States (Pacific Time)|3:19 AM|g|duudd|9,348 0.5|1,729,972 99.5|1,628,988 93.7|108,452 6.2|19,866,143|3.895
Germany|11:19 AM|o|ududd|167,493 11.8|1,257,220 88.2|1,115,294 78.3|253,855 17.8|17,090,320|3.351
Italy|11:19 AM|o|ududd|135,892 11.7|1,021,702 88.3|909,731 78.6|204,557 17.7|13,504,058|2.648
Russia (Moscow Time)|1:19 PM|y|duuuu|117,353 15.4|645,513 84.6|462,965 60.7|237,378 31.1|10,351,322|2.030
Saudi Arabia|1:19 PM|y|duuuu|118,229 15.6|639,580 84.4|458,295 60.5|237,968 31.4|10,156,255|1.991
Turkey|12:19 PM|g|dudud|169,230 20.0|674,948 80.0|574,930 68.1|197,700 23.4|8,663,858|1.699
Japan|7:19 PM|g|duudd|193,215 19.7|787,510 80.3|690,766 70.4|216,137 22.0|8,571,445|1.681
Philippines|6:19 PM|y|duduu|178,590 18.5|785,032 81.5|712,095 73.9|186,790 19.4|8,477,824|1.662
Indonesia|5:19 PM|y|ududd|97,046 12.9|656,969 87.1|582,430 77.2|137,599 18.2|8,052,909|1.579
Spain|11:19 AM|o|ududd|72,383 11.5|554,766 88.5|493,257 78.7|109,731 17.5|7,074,760|1.387
India|3:49 PM|o|duuud|52,624 9.5|502,281 90.5|437,636 78.9|98,527 17.8|7,019,845|1.376
United States (Mountain Time)|4:19 AM|y|ududu|6,829 1.0|659,294 99.0|635,401 95.4|29,824 4.5|6,958,314|1.364
South Korea|7:19 PM|y|duddu|158,553 20.3|621,688 79.7|549,648 70.4|167,573 21.5|6,701,095|1.314
Mexico|4:19 AM|g|duuud|7,024 1.1|628,927 98.9|606,559 95.4|27,957 4.4|6,499,644|1.274
Malaysia|6:19 PM|y|duduu|125,761 19.0|537,081 81.0|488,442 73.7|129,635 19.6|6,162,347|1.208
Netherlands|11:19 AM|o|ududd|57,906 11.2|461,312 88.8|407,012 78.4|91,912 17.7|5,824,150|1.142
Vietnam|5:19 PM|y|ududu|69,088 12.9|467,920 87.1|413,452 77.0|100,396 18.7|5,614,384|1.101
Canada (Eastern Time)|6:19 AM|y|udddu|100,144 13.5|640,744 86.5|694,890 93.8|36,949 5.0|5,234,098|1.026
Australia (Sydney)|9:19 PM|g|ududd|47,736 11.4|371,175 88.6|305,692 73.0|94,386 22.5|4,914,489|0.964
Brazil (Brasilia Time)|7:19 AM|y|duduu|100,457 14.3|604,414 85.7|610,098 86.6|78,856 11.2|4,788,192|0.939
Thailand|5:19 PM|y|ududu|59,062 13.5|377,445 86.5|338,326 77.5|78,276 17.9|4,610,799|0.904
United Arab Emirates|2:19 PM|o|duudd|21,824 7.8|257,784 92.2|190,745 68.2|78,233 28.0|4,529,752|0.888
Australia (Melbourne)|9:19 PM|y|ududu|44,677 12.0|328,553 88.0|269,679 72.3|84,612 22.7|4,307,189|0.845
Switzerland|11:19 AM|o|ududd|40,370 12.1|292,353 87.9|261,656 78.6|57,247 17.2|3,768,663|0.739
Belgium|11:19 AM|y|udduu|34,460 12.1|251,408 87.9|222,423 77.8|51,158 17.9|3,305,736|0.648
Sweden|11:19 AM|y|ududu|30,934 11.9|230,000 88.1|205,525 78.8|45,835 17.6|2,843,192|0.557
Russia (Yekaterinburg Time)|3:19 PM|y|ududu|18,634 8.1|210,226 91.9|179,834 78.6|42,313 18.5|2,767,569|0.543
Norway|11:19 AM|g|ududd|23,440 11.7|177,283 88.3|156,202 77.8|37,040 18.5|2,346,419|0.460
New Zealand|11:19 PM|l|udddu|21,701 13.4|140,793 86.6|106,322 65.4|44,900 27.6|2,107,230|0.413
Taiwan|6:19 PM|o|dudud|40,586 18.5|179,251 81.5|162,173 73.8|43,834 19.9|2,053,342|0.403
Singapore|6:19 PM|o|duuud|44,335 19.0|188,512 81.0|172,078 73.9|44,756 19.2|1,985,925|0.389
Denmark|11:19 AM|g|ududd|18,480 11.5|142,356 88.5|125,473 78.0|29,096 18.1|1,974,063|0.387
Canada (Pacific Time)|3:19 AM|g|uduud|751 0.5|154,788 99.5|145,525 93.6|9,329 6.0|1,897,751|0.372
Austria|11:19 AM|g|ududd|18,960 12.0|138,966 88.0|124,155 78.6|26,650 16.9|1,745,908|0.342
Colombia|5:19 AM|o|ududd|4,406 2.9|147,327 97.1|144,977 95.5|6,523 4.3|1,481,628|0.291
Kuwait|1:19 PM|g|duuud|15,525 14.6|90,482 85.4|64,606 60.9|33,226 31.3|1,427,627|0.280
Australia (Adelaide)|8:49 PM|g|ududd|13,650 12.4|96,479 87.6|77,127 70.0|26,520 24.1|1,316,527|0.258
Australia (Perth)|6:19 PM|g|duuud|28,973 18.7|126,289 81.3|114,050 73.5|30,528 19.7|1,307,330|0.256
Canada (Mountain Time)|4:19 AM|l|udddu|1,551 1.1|136,330 98.9|131,898 95.7|5,921 4.3|1,290,400|0.253
Israel|12:19 PM|y|udduu|22,576 19.7|92,070 80.3|78,244 68.2|27,105 23.6|1,239,743|0.243
Finland|12:19 PM|l|duduu|23,394 20.8|88,935 79.2|75,296 67.0|27,185 24.2|1,209,003|0.237
Hong Kong|6:19 PM|y|duddu|23,795 18.5|104,691 81.5|95,073 74.0|25,172 19.6|1,150,473|0.226
Ireland|10:19 AM|o|duudd|7,124 8.4|77,539 91.6|66,476 78.5|15,923 18.8|1,005,551|0.197
Russia (Samara Time)|2:19 PM|o|duudd|5,447 8.6|58,126 91.4|43,431 68.3|17,419 27.4|990,979|0.194
Lebanon|12:19 PM|o|uduud|18,234 19.6|74,559 80.4|62,576 67.4|22,550 24.3|976,948|0.192
Egypt|12:19 PM|o|uddud|17,101 19.9|68,711 80.1|56,724 66.1|21,404 24.9|934,988|0.183
Chile|7:19 AM|o|dudud|18,914 14.8|108,702 85.2|109,723 86.0|14,831 11.6|910,718|0.179
Portugal|10:19 AM|o|duudd|7,220 9.5|68,504 90.5|57,828 76.4|15,079 19.9|865,755|0.170
Bangladesh|4:19 PM|g|duuud|8,020 11.6|61,057 88.4|54,702 79.2|11,526 16.7|838,007|0.164
Canada (Central Time)|5:19 AM|m|udddu|2,277 2.8|79,349 97.2|78,072 95.6|3,349 4.1|788,980|0.155
Pakistan|3:19 PM|y|uduuu|5,950 9.3|58,320 90.7|49,951 77.7|11,650 18.1|783,715|0.154
Kazakstan|4:19 PM|o|duudd|7,873 10.6|66,057 89.4|58,351 78.9|13,049 17.7|764,811|0.150
Greece|12:19 PM|y|duduu|14,247 20.7|54,496 79.3|46,070 67.0|16,228 23.6|757,185|0.148
Azerbaijan|2:19 PM|o|duudd|3,899 8.2|43,928 91.8|32,353 67.6|13,499 28.2|744,127|0.146
Russia (Omsk Time)|4:19 PM|o|duuud|7,324 11.5|56,249 88.5|49,755 78.3|11,401 17.9|730,068|0.143
Oman|2:19 PM|y|udddu|3,601 8.2|40,461 91.8|29,499 66.9|12,972 29.4|717,716|0.141
South Africa|12:19 PM|l|duduu|14,648 20.0|58,663 80.0|48,649 66.4|18,333 25.0|712,210|0.140
Ukraine|12:19 PM|o|duuud|14,145 19.7|57,745 80.3|48,928 68.1|17,003 23.7|693,963|0.136
Hawaii (United States)|12:19 AM|o|duudd|3,175 6.6|44,873 93.4|35,082 73.0|11,198 23.3|684,666|0.134
Poland|11:19 AM|y|ududu|7,900 13.3|51,381 86.7|47,576 80.3|9,398 15.9|610,205|0.120
Venezuela|5:49 AM|o|uduud|6,130 8.0|70,600 92.0|73,126 95.3|3,051 4.0|561,794|0.110
Argentina|7:19 AM|l|duuuu|13,148 14.6|77,014 85.4|78,250 86.8|10,027 11.1|561,220|0.110
Canada (Atlantic Time)|7:19 AM|o|duuud|9,399 14.3|56,235 85.7|56,500 86.1|8,025 12.2|533,017|0.105
Czech Republic|11:19 AM|o|ududd|5,206 11.6|39,488 88.4|35,352 79.1|7,500 16.8|497,746|0.098
Brazil (Amazon Time)|6:19 AM|y|udduu|11,155 14.2|67,164 85.8|73,173 93.4|4,175 5.3|474,271|0.093
Romania|12:19 PM|o|duudd|9,771 19.8|39,525 80.2|33,400 67.8|11,850 24.0|470,810|0.092
Nepal|4:04 PM|g|udddd|3,475 10.8|28,796 89.2|25,274 78.3|6,072 18.8|457,794|0.090
Uzbekistan|3:19 PM|l|ududu|2,851 8.1|32,360 91.9|27,475 78.0|6,700 19.0|446,156|0.087
Hungary|11:19 AM|o|uddud|4,176 12.6|28,915 87.4|25,649 77.5|5,801 17.5|402,726|0.079
Peru|5:19 AM|l|udddu|1,376 3.2|41,952 96.8|41,650 96.1|1,650 3.8|364,305|0.071
Russia (Krasnoyarsk Time)|5:19 PM|l|ududu|5,701 14.9|32,443 85.1|29,475 77.3|6,998 18.3|358,925|0.070
Ecuador|5:19 AM|o|ududd|1,078 3.1|33,284 96.9|32,826 95.5|1,425 4.1|353,920|0.069
Guatemala|4:19 AM|m|udddu|450 1.2|37,039 98.8|35,948 95.9|1,697 4.5|340,214|0.067
Alaska (United States)|2:19 AM|o|ududd|325 1.3|25,641 98.7|23,354 89.9|2,549 9.8|329,132|0.065
Costa Rica|4:19 AM|o|ududd|225 0.9|24,817 99.1|23,828 95.2|1,274 5.1|326,314|0.064
Russia (Vladivostok Time)|8:19 PM|o|duudd|3,475 13.7|21,954 86.3|17,405 68.4|6,823 26.8|325,003|0.064
Russia (Yakutsk Time)|7:19 PM|l|duduu|7,574 19.9|30,570 80.1|26,823 70.3|8,250 21.6|306,609|0.060
Croatia|11:19 AM|y|ududu|3,052 12.4|21,549 87.6|19,625 79.8|4,048 16.5|293,197|0.057
Qatar|1:19 PM|y|duduu|3,248 18.1|14,732 81.9|10,874 60.5|5,329 29.6|265,114|0.052
Russia (Magadan Time)|8:19 PM|l|duuuu|3,274 12.9|22,155 87.1|17,425 68.5|6,502 25.6|264,928|0.052
Bolivia|6:19 AM|g|udddd|7,778 14.4|46,080 85.6|51,274 95.2|2,074 3.9|264,533|0.052
Sri Lanka|3:49 PM|o|udddd|1,952 11.0|15,769 89.0|13,774 77.7|3,323 18.8|236,734|0.046
Russia (Irkutsk Time)|6:19 PM|g|dudud|4,921 19.4|20,508 80.6|18,875 74.2|4,827 19.0|223,206|0.044
El Salvador|4:19 AM|o|uduud|250 1.1|22,420 98.9|21,676 95.6|901 4.0|221,384|0.043
Luxembourg|11:19 AM|d|udddu|2,227 12.0|16,303 88.0|14,523 78.4|3,398 18.3|217,113|0.043
Dominican Republic|7:19 AM|y|duduu|4,695 15.0|26,574 85.0|26,950 86.2|3,751 12.0|215,155|0.042
Panama|5:19 AM|o|uduud|425 2.9|14,129 97.1|13,626 93.6|875 6.0|202,213|0.040
Slovakia|11:19 AM|y|duuuu|2,324 13.2|15,255 86.8|13,325 75.8|3,500 19.9|201,073|0.039
Belarus|1:19 PM|o|ududd|2,425 17.6|11,340 82.4|8,126 59.0|4,248 30.9|191,870|0.038
Lithuania|12:19 PM|o|uduud|2,403 19.0|10,255 81.0|8,925 70.5|2,900 22.9|188,828|0.037
Bulgaria|12:19 PM|o|duuud|2,725 18.6|11,958 81.4|10,050 68.4|3,651 24.9|171,590|0.034
Macau|6:19 PM|m|udduu|2,625 17.1|12,704 82.9|11,500 75.0|2,702 17.6|156,433|0.031
Canada (Newfoundland Time)|7:49 AM|o|duudd|1,700 10.0|15,339 90.0|14,575 85.5|2,150 12.6|141,127|0.028
Slovenia|11:19 AM|d|duddu|1,349 12.7|9,283 87.3|8,648 81.3|1,673 15.7|135,318|0.027
Albania|11:19 AM|m|udduu|1,875 14.8|10,793 85.2|10,149 80.1|2,026 16.0|124,750|0.024
Algeria|11:19 AM|r|duudd|975 11.4|7,543 88.6|6,650 78.1|1,523 17.9|95,058|0.019
Brunei Darussalam|6:19 PM|l|udddu|1,551 21.1|5,808 78.9|5,275 71.7|1,499 20.4|88,494|0.017
Tunisia|11:19 AM|o|uduud|676 9.6|6,394 90.4|5,700 80.6|1,175 16.6|72,739|0.014
Angola|11:19 AM|r|uduud|500 12.1|3,633 87.9|3,200 77.4|700 16.9|65,878|0.013
Kenya|1:19 PM|d|duddu|675 14.9|3,866 85.1|2,699 59.4|1,549 34.1|49,300|0.010
Nigeria|11:19 AM|g|duuud|825 11.7|6,231 88.3|5,625 79.7|1,050 14.9|45,494|0.009
Ghana|10:19 AM|r|ududd|201 7.6|2,457 92.4|2,125 80.0|500 18.8|33,031|0.006
Uruguay|7:19 AM|d|udddu|1,725 16.2|8,927 83.8|9,574 89.9|925 8.7|30,968|0.006
Madagascar|1:19 PM|m|udddu|200 13.4|1,296 86.6|975 65.1|524 35.0|11,490|0.002
Bermuda|7:19 AM|m|udduu|125 30.6|283 69.4|350 85.7|75 18.4|9,763|0.002
Barbados|6:19 AM|d|duduu|200 12.5|1,398 87.5|1,575 98.5|25 1.6|788|0.000`;

document.getElementById('rows').innerHTML = data.split('\n').map(line => {
  const f = line.split('|');
  const arrow = i => '<i class="arrow">' + (f[3][i] === 'u' ? '▲' : '▼') + '</i>';
  const name = f[0].replace(/(\(.*\))/, '<small>$1</small>');
  const nums = [0, 1, 2, 3].map(i => {
    const [n, pct] = f[4 + i].split(' ');
    return '<td>' + arrow(i) + n + '<em>' + pct + ' %</em></td>';
  }).join('');
  return '<tr class="tone-' + f[2] + '"><td>' + name + '</td><td>' + f[1] + '</td>' + nums +
    '<td>' + arrow(4) + f[8] + '</td><td>' + f[9] + ' %</td></tr>';
}).join('');
```
